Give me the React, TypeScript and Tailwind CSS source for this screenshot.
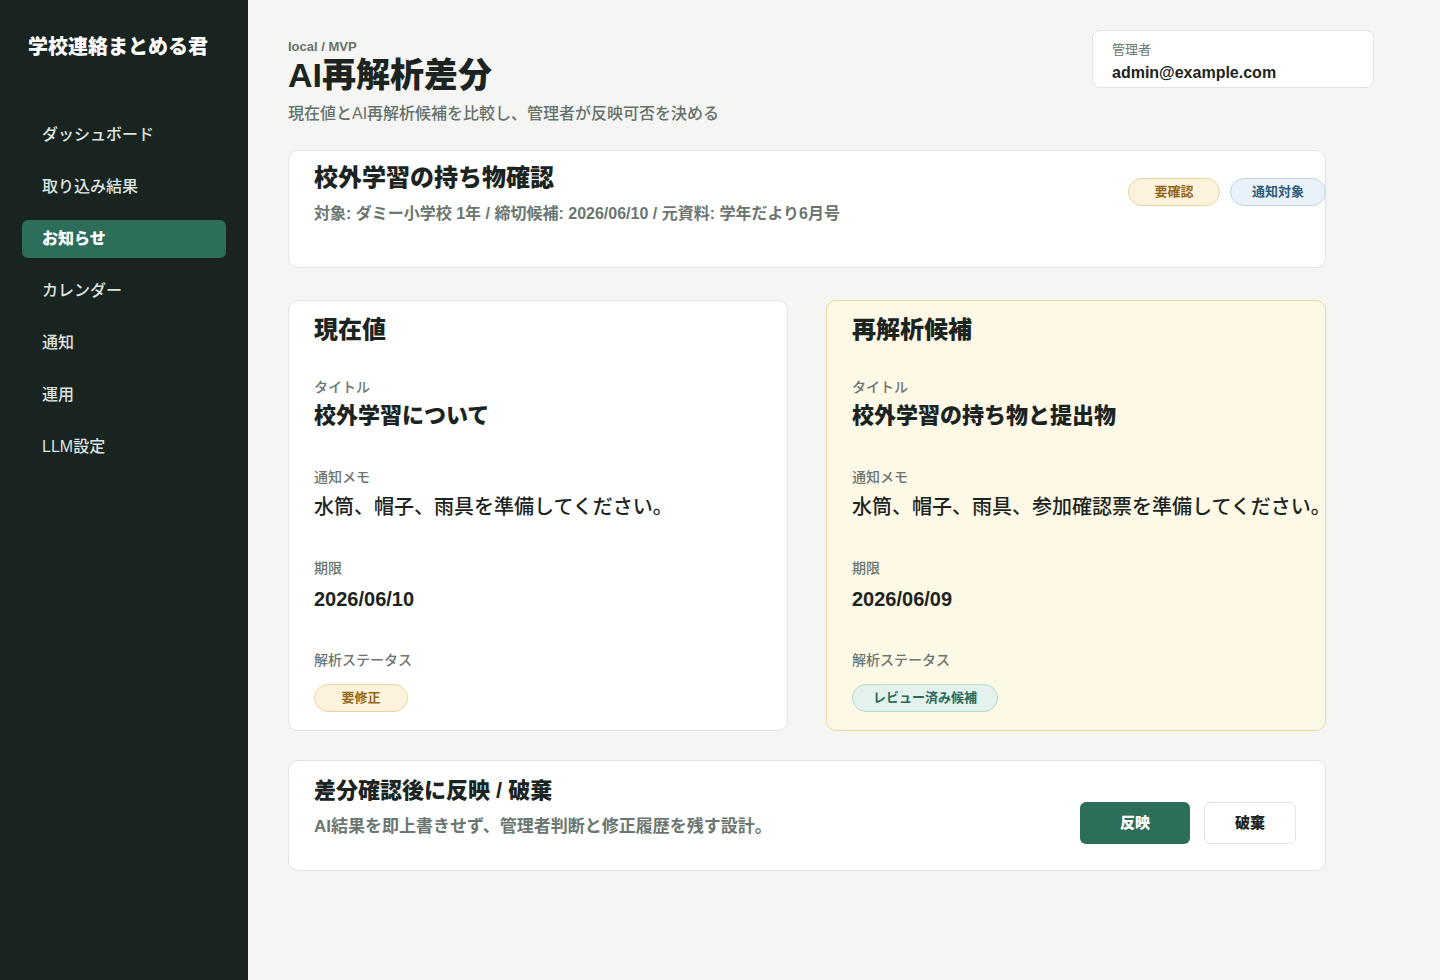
import React from "react";

const FONT = { fontFamily: '"Liberation Sans", "Noto Sans CJK JP", sans-serif' };

const navItems = ["ダッシュボード", "取り込み結果", "お知らせ", "カレンダー", "通知", "運用", "LLM設定"];

function Badge({ children, tone, w }: { children: React.ReactNode; tone: "amber" | "blue" | "green"; w: string }) {
  const cls =
    tone === "amber"
      ? "bg-[#fdf3dc] border-[#ecd59e] text-[#94661a]"
      : tone === "blue"
      ? "bg-[#e9f2f8] border-[#bcd5e6] text-[#2f5b7b]"
      : "bg-[#e3f2ec] border-[#b6dbcc] text-[#2c6b57]";
  return (
    <span
      className={`inline-flex h-[28px] items-center justify-center rounded-full border text-[13px] font-bold ${w} ${cls}`}
    >
      {children}
    </span>
  );
}

function Field({ label, children, first }: { label: string; children: React.ReactNode; first?: boolean }) {
  return (
    <div className={first ? "mt-[32px]" : "mt-[36px]"}>
      <div className="text-[14px] leading-[20px] font-medium text-[#6b7670]">{label}</div>
      {children}
    </div>
  );
}

function CompareCard({
  heading,
  title,
  memo,
  due,
  status,
  candidate,
}: {
  heading: string;
  title: string;
  memo: string;
  due: string;
  status: React.ReactNode;
  candidate?: boolean;
}) {
  return (
    <div
      className={`h-[431px] rounded-[10px] border px-[25px] pt-[14px] ${
        candidate ? "bg-[#fef8e7] border-[#ecd7a0]" : "bg-white border-[#e3e3df]"
      }`}
    >
      <h2 className="text-[24px] leading-[30px] font-black text-[#1b2420]">{heading}</h2>
      <Field label="タイトル" first>
        <div className="mt-[4px] text-[22px] leading-[30px] font-black text-[#1b2420] whitespace-nowrap">{title}</div>
      </Field>
      <Field label="通知メモ">
        <div className="mt-[5px] text-[20px] leading-[30px] font-medium text-[#1b2420] whitespace-nowrap">{memo}</div>
      </Field>
      <Field label="期限">
        <div className="mt-[6px] text-[20px] leading-[30px] font-bold text-[#1b2420]">{due}</div>
      </Field>
      <Field label="解析ステータス">
        <div className="mt-[14px]">{status}</div>
      </Field>
    </div>
  );
}

export default function App() {
  return (
    <div className="flex min-h-[980px] w-[1440px] bg-[#f5f5f3]" style={FONT}>
      <aside className="w-[248px] shrink-0 bg-[#19231f] px-[22px] pt-[33px]">
        <div className="ml-[6px] text-[20px] leading-[28px] font-black text-white">学校連絡まとめる君</div>
        <nav className="mt-[55px] flex flex-col gap-[14px]">
          {navItems.map((n) => (
            <div
              key={n}
              className={`flex h-[38px] items-center rounded-[6px] px-[20px] text-[16px] ${
                n === "お知らせ" ? "bg-[#2d6e5a] font-black text-white" : "font-medium text-[#dde4e0]"
              }`}
            >
              {n}
            </div>
          ))}
        </nav>
      </aside>

      <main className="flex-1 pl-[40px] pt-[30px]">
        <header className="flex w-[1086px] items-start justify-between">
          <div className="mt-[9px]">
            <div className="text-[13px] leading-[16px] font-bold text-[#66716b]">local / MVP</div>
            <h1 className="text-[34px] leading-[40px] font-black text-[#1b2420]">AI再解析差分</h1>
            <p className="mt-[7px] text-[16px] leading-[24px] font-medium text-[#66716b]">
              現在値とAI再解析候補を比較し、管理者が反映可否を決める
            </p>
          </div>
          <div className="h-[58px] w-[282px] rounded-[8px] border border-[#e3e3df] bg-white px-[19px] pt-[10px]">
            <div className="text-[13px] leading-[18px] text-[#6b7670]">管理者</div>
            <div className="mt-[3px] text-[16px] leading-[22px] font-bold text-[#1b2420]">admin@example.com</div>
          </div>
        </header>

        <div className="w-[1038px]">
          <section className="mt-[24px] flex h-[118px] justify-between rounded-[10px] border border-[#e3e3df] bg-white pl-[25px] pt-[12px]">
            <div>
              <h2 className="text-[24px] leading-[30px] font-black text-[#1b2420]">校外学習の持ち物確認</h2>
              <p className="mt-[9px] text-[16px] leading-[24px] font-bold text-[#6b7670]">
                対象: ダミー小学校 1年 / 締切候補: 2026/06/10 / 元資料: 学年だより6月号
              </p>
            </div>
            <div className="mr-[-1px] mt-[15px] flex gap-[10px]">
              <Badge tone="amber" w="w-[92px]">要確認</Badge>
              <Badge tone="blue" w="w-[96px]">通知対象</Badge>
            </div>
          </section>

          <div className="mt-[32px] grid grid-cols-2 gap-[38px]">
            <CompareCard
              heading="現在値"
              title="校外学習について"
              memo="水筒、帽子、雨具を準備してください。"
              due="2026/06/10"
              status={<Badge tone="amber" w="w-[94px]">要修正</Badge>}
            />
            <CompareCard
              candidate
              heading="再解析候補"
              title="校外学習の持ち物と提出物"
              memo="水筒、帽子、雨具、参加確認票を準備してください。"
              due="2026/06/09"
              status={<Badge tone="green" w="w-[146px]">レビュー済み候補</Badge>}
            />
          </div>

          <section className="mt-[29px] flex h-[111px] justify-between rounded-[10px] border border-[#e3e3df] bg-white pl-[25px] pr-[29px] pt-[15px]">
            <div>
              <h2 className="text-[22px] leading-[30px] font-black text-[#1b2420]">差分確認後に反映 / 破棄</h2>
              <p className="mt-[9px] text-[17px] leading-[24px] font-bold text-[#6b7670]">
                AI結果を即上書きせず、管理者判断と修正履歴を残す設計。
              </p>
            </div>
            <div className="mt-[26px] flex gap-[14px]">
              <button className="h-[42px] w-[110px] rounded-[6px] bg-[#2d6e5a] text-[15px] font-black text-white">
                反映
              </button>
              <button className="h-[42px] w-[92px] rounded-[6px] border border-[#e3e3df] bg-white text-[15px] font-black text-[#1b2420]">
                破棄
              </button>
            </div>
          </section>
        </div>
      </main>
    </div>
  );
}
